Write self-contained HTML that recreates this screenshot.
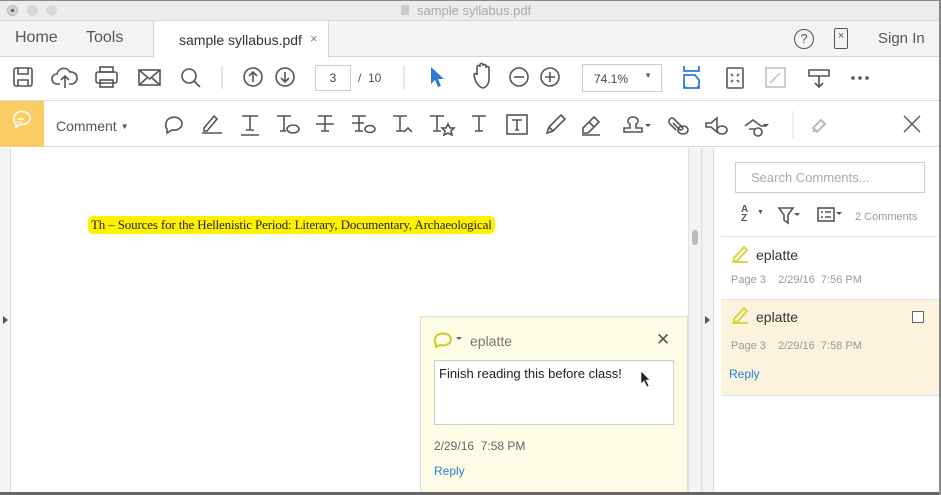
<!DOCTYPE html>
<html><head><style>
*{margin:0;padding:0;box-sizing:border-box}
body{width:941px;height:495px;overflow:hidden;font-family:"Liberation Sans",sans-serif;background:#fff;position:relative}
.a{position:absolute}
svg{position:absolute;overflow:visible}
.ic{stroke:#555;stroke-width:1.6;fill:none}
</style></head><body>
<div class="a" style="left:0;top:0;width:941px;height:21px;background:#ececec;border-bottom:1px solid #d8d8d8;border-top:1px solid #888"></div>
<div class="a" style="left:7px;top:5px;width:11px;height:11px;border-radius:50%;background:#d0d0d0;border:1px solid #bbb"></div>
<div class="a" style="left:11px;top:9px;width:3px;height:3px;border-radius:50%;background:#555"></div>
<div class="a" style="left:27px;top:5px;width:11px;height:11px;border-radius:50%;background:#d8d8d8"></div>
<div class="a" style="left:46px;top:5px;width:11px;height:11px;border-radius:50%;background:#d8d8d8"></div>
<div class="a" style="left:401px;top:5px;width:8px;height:10px;background:#ccc"></div>
<div class="a" style="left:417px;top:3px;font-size:13px;color:#aaa">sample syllabus.pdf</div>
<div class="a" style="left:0;top:21px;width:941px;height:36px;background:#f4f4f4;border-bottom:1px solid #d4d4d4"></div>
<div class="a" style="left:153px;top:21px;width:176px;height:37px;background:#fff;border-left:1px solid #d4d4d4;border-right:1px solid #d4d4d4"></div>
<div class="a" style="left:15px;top:29px;font-size:16px;color:#555">Home</div>
<div class="a" style="left:86px;top:29px;font-size:16px;color:#555">Tools</div>
<div class="a" style="left:179px;top:32px;font-size:14px;color:#333">sample syllabus.pdf</div>
<div class="a" style="left:310px;top:31px;font-size:13px;color:#888">×</div>
<div class="a" style="left:794px;top:29px;width:20px;height:20px;border:1.6px solid #555;border-radius:50%;font-size:13px;color:#555;text-align:center;line-height:17px">?</div>
<div class="a" style="left:834px;top:28px;width:14px;height:21px;border:1.6px solid #555;border-radius:2px;font-size:11px;color:#555;text-align:center;line-height:15px">×</div>
<div class="a" style="left:878px;top:30px;font-size:15px;color:#555">Sign In</div>
<div class="a" style="left:0;top:100px;width:941px;height:1px;background:#ddd"></div>
<svg width="941" height="100" style="left:0;top:0">
<g class="ic">
<rect x="14" y="68" width="18" height="18" rx="2"/><path d="M18 68v6h10v-6M18 86v-6h10v6"/>
<path d="M60 84h-3a5 5 0 0 1 0-10a7 7 0 0 1 13-2a5 5 0 0 1 2 12h-3M65 88v-12M61 80l4-4l4 4"/>
<rect x="96" y="72" width="21" height="11" rx="2"/><rect x="100" y="67" width="13" height="5"/><rect x="100" y="80" width="13" height="7"/>
<rect x="139" y="70" width="21" height="15"/><path d="M139 70l10.5 9l10.5-9M139 85l8-7M160 85l-8-7"/>
<circle cx="189" cy="76" r="7"/><path d="M194 81l6 6"/>
<circle cx="253" cy="77" r="9"/><path d="M253 82v-10M249 76l4-4l4 4"/>
<circle cx="285" cy="77" r="9"/><path d="M285 72v10M281 78l4 4l4-4"/>
<circle cx="519" cy="77" r="9"/><path d="M514 77h10"/>
<circle cx="550" cy="77" r="9"/><path d="M545 77h10M550 72v10"/>
<path d="M483 88c-4-1-7-5-8-9l-1-4c0-2 2-2 3 0v-8c0-2 3-2 3 0v-2c0-2 3-2 3 0v1c0-2 3-2 3 0v2c0-2 3-2 3 0v11c0 4-2 8-6 9z"/>
<rect x="727" y="68" width="16" height="20" rx="1"/><path d="M731 74l2 2M739 74l-2 2M731 82l2-2M739 82l-2-2"/>
<path d="M809 70h20v6h-20zM819 76v11M815 83l4 4l4-4"/>
</g>
<path d="M431 67v17l4-4l3 7l3-1l-3-7h6z" fill="#2d7bd6"/>
<g stroke="#2d7bd6" stroke-width="1.8" fill="none"><path d="M684 66v5h15v-5M684 75v13h15v-8l-4-5zM686 88l-2-2M697 88l2-2"/></g>
<rect x="766" y="68" width="19" height="19" fill="none" stroke="#bbb" stroke-width="1.5"/>
<path d="M770 83l10-10" stroke="#bbb" stroke-width="1.3"/>
<circle cx="853" cy="78" r="1.8" fill="#555"/><circle cx="860" cy="78" r="1.8" fill="#555"/><circle cx="867" cy="78" r="1.8" fill="#555"/>
<path d="M222 66v23M404 66v23" stroke="#ccc"/>
</svg>
<div class="a" style="left:315px;top:65px;width:36px;height:26px;border:1px solid #ccc;font-size:12px;color:#444;text-align:center;line-height:24px">3</div>
<div class="a" style="left:358px;top:71px;font-size:12px;color:#555">/&nbsp; 10</div>
<div class="a" style="left:582px;top:64px;width:80px;height:28px;border:1px solid #ccc;font-size:12px;color:#444;padding:7px 11px">74.1%<span style="position:absolute;right:9px;top:6px;font-size:8px;color:#666">▼</span></div>
<div class="a" style="left:0;top:101px;width:941px;height:46px;background:#fff;border-bottom:1px solid #ddd"></div>
<div class="a" style="left:0;top:101px;width:44px;height:46px;background:#f9cd62"></div>
<svg width="941" height="150" style="left:0;top:0">
<path d="M14 118a8 6.5 0 1 1 6 6.3l-4 3v-3.5a7 6 0 0 1-2-5.8z" fill="none" stroke="#fff" stroke-width="1.6"/>
<path d="M17 119h7M17 122h5" stroke="#fff" stroke-width="1.2"/>
<g class="ic">
<path d="M166 124a8 6.5 0 1 1 6 6l-5 3v-4a7 6 0 0 1-1-5z"/>
<path d="M204 128l10-12l3 3l-10 12h-3zM202 133h20" />
<path d="M242 116h16M250 116v14M246 130h8M241 135h18"/>
<path d="M277 116h14M284 116v15M280 131h6"/><ellipse cx="293" cy="129" rx="6" ry="4"/>
<path d="M318 116h14M325 116v15M321 131h8M316 124h18"/>
<path d="M352 116h14M359 116v15M355 131h8M352 123h12"/><ellipse cx="370" cy="129" rx="5" ry="3.5"/>
<path d="M393 116h14M400 116v15M396 131h8M404 132l4-4l4 4"/>
<path d="M430 116h14M437 116v15M433 131h8"/><path d="M448 124l2 4h4l-3 3l1 4l-4-2l-4 2l1-4l-3-3h4z"/>
<path d="M472 116h14M479 116v15M475 131h8"/>
<rect x="507" y="115" width="20" height="19"/><path d="M512 120h10M517 120v10M515 130h4"/>
<path d="M547 133l2-6l12-12l4 4l-12 12zM549 127l4 4"/>
<path d="M583 128l11-11l5 5l-11 11h-5zM589 122l5 5M582 135h18"/>
<path d="M624 132h18v-4h-6v-4c3-1 3-7-3-7s-6 6-3 7v4h-6z"/>
<path d="M676 130l-6-6c-3-3 1-8 4-5l8 8c2 2-1 4-3 2l-6-6"/><ellipse cx="683" cy="130" rx="5" ry="4"/>
<path d="M706 123h5l6-5v14l-6-5h-5z"/><ellipse cx="722" cy="130" rx="5" ry="4"/>
<path d="M745 126l8-6l8 6h5M749 129h6"/><circle cx="758" cy="132" r="4"/>
<path d="M904 116l16 16M920 116l-16 16" stroke-width="1.4"/>
</g>
<path d="M645 124l3 3l3-3z M763 124l3 3l3-3z" fill="#555"/>
<path d="M793 111v27" stroke="#ddd"/>
<path d="M813 128l8-8l4 4l-8 8zM813 132l3-3" stroke="#bbb" stroke-width="2" fill="none"/>
</svg>
<div class="a" style="left:56px;top:118px;font-size:14px;color:#555">Comment <span style="font-size:8px;position:relative;top:-2px">▼</span></div>
<div class="a" style="left:0;top:148px;width:11px;height:347px;background:#f2f2f2;border-right:1px solid #ddd"></div>
<div class="a" style="left:3px;top:316px;border-left:5px solid #555;border-top:4px solid transparent;border-bottom:4px solid transparent"></div>
<div class="a" style="left:688px;top:148px;width:13px;height:347px;background:#f4f4f4;border-left:1px solid #e0e0e0"></div>
<div class="a" style="left:692px;top:230px;width:6px;height:15px;background:#bbb;border-radius:3px"></div>
<div class="a" style="left:701px;top:148px;width:13px;height:347px;background:#f2f2f2;border-left:1px solid #ddd;border-right:1px solid #ddd"></div>
<div class="a" style="left:705px;top:316px;border-left:5px solid #555;border-top:4px solid transparent;border-bottom:4px solid transparent"></div>
<div class="a" style="left:88px;top:216px;background:#fff200;border-radius:5px;padding:1px 3px;font-family:'Liberation Serif',serif;font-size:13px;color:#222;letter-spacing:-0.15px;white-space:nowrap">Th – Sources for the Hellenistic Period: Literary, Documentary, Archaeological</div>
<div class="a" style="left:420px;top:316px;width:268px;height:179px;background:#fdfde6;border:1px solid #ddd"></div>
<svg width="40" height="20" style="left:434px;top:331px"><path d="M1 8a8 6 0 1 1 5 6l-4 2v-3a6 5 0 0 1-1-5z" fill="none" stroke="#c8c814" stroke-width="1.8"/><path d="M22 6l3 3l3-3z" fill="#666"/></svg>
<div class="a" style="left:470px;top:333px;font-size:14px;color:#777">eplatte</div>
<div class="a" style="left:656px;top:330px;font-size:17px;color:#555">✕</div>
<div class="a" style="left:434px;top:360px;width:240px;height:65px;background:#fff;border:1px solid #ccc;font-size:13px;color:#222;padding:5px 4px">Finish reading this before class!</div>
<svg width="12" height="18" style="left:640px;top:370px"><path d="M1 1v13l3-3l3 6l2-1l-3-6h4z" fill="#222" stroke="#fff" stroke-width=".6"/></svg>
<div class="a" style="left:434px;top:439px;font-size:12px;color:#666">2/29/16&nbsp; 7:58 PM</div>
<div class="a" style="left:434px;top:464px;font-size:12px;color:#2d7bd6">Reply</div>
<div class="a" style="left:735px;top:162px;width:190px;height:31px;border:1px solid #ccc;font-size:13px;color:#aaa;padding:7px 15px">Search Comments...</div>
<div class="a" style="left:741px;top:205px;font-size:10px;color:#555;line-height:9px;font-weight:bold">A<br>Z</div>
<div class="a" style="left:757px;top:209px;font-size:7px;color:#555">▼</div>
<svg width="90" height="20" style="left:777px;top:207px"><path d="M2 1h14l-5 7v8l-4-3v-5z" fill="none" stroke="#555" stroke-width="1.6"/><path d="M17 6l3 3l3-3z" fill="#555"/><rect x="41" y="1" width="16" height="13" fill="none" stroke="#555" stroke-width="1.6"/><path d="M44 5h2M48 5h6M44 10h2M48 10h6" stroke="#555" stroke-width="1.6"/><path d="M59 5l3 3l3-3z" fill="#555"/></svg>
<div class="a" style="left:855px;top:211px;font-size:11px;color:#999">2 Comments</div>
<div class="a" style="left:721px;top:236px;width:220px;height:1px;background:#e2e2e2"></div>
<svg width="24" height="20" style="left:730px;top:245px"><path d="M4 13l10-11l3 3l-10 11h-3zM2 17h16" fill="none" stroke="#d4d430" stroke-width="1.8"/></svg>
<div class="a" style="left:756px;top:247px;font-size:14px;color:#333">eplatte</div>
<div class="a" style="left:731px;top:274px;font-size:11px;color:#999">Page 3&nbsp;&nbsp;&nbsp; 2/29/16&nbsp; 7:56 PM</div>
<div class="a" style="left:721px;top:299px;width:220px;height:97px;background:#fcf3dd;border-top:1px solid #e4e4e4;border-bottom:1px solid #e0e0e0"></div>
<svg width="24" height="20" style="left:730px;top:306px"><path d="M4 13l10-11l3 3l-10 11h-3zM2 17h16" fill="none" stroke="#d4d430" stroke-width="1.8"/></svg>
<div class="a" style="left:756px;top:309px;font-size:14px;color:#333">eplatte</div>
<div class="a" style="left:912px;top:311px;width:12px;height:12px;border:1px solid #666;background:#fff"></div>
<div class="a" style="left:731px;top:340px;font-size:11px;color:#999">Page 3&nbsp;&nbsp;&nbsp; 2/29/16&nbsp; 7:58 PM</div>
<div class="a" style="left:729px;top:367px;font-size:12px;color:#2d7bd6">Reply</div>
<div class="a" style="left:0;top:492px;width:941px;height:3px;background:#666"></div>
<div class="a" style="left:939px;top:0;width:2px;height:495px;background:#888"></div>
</body></html>
